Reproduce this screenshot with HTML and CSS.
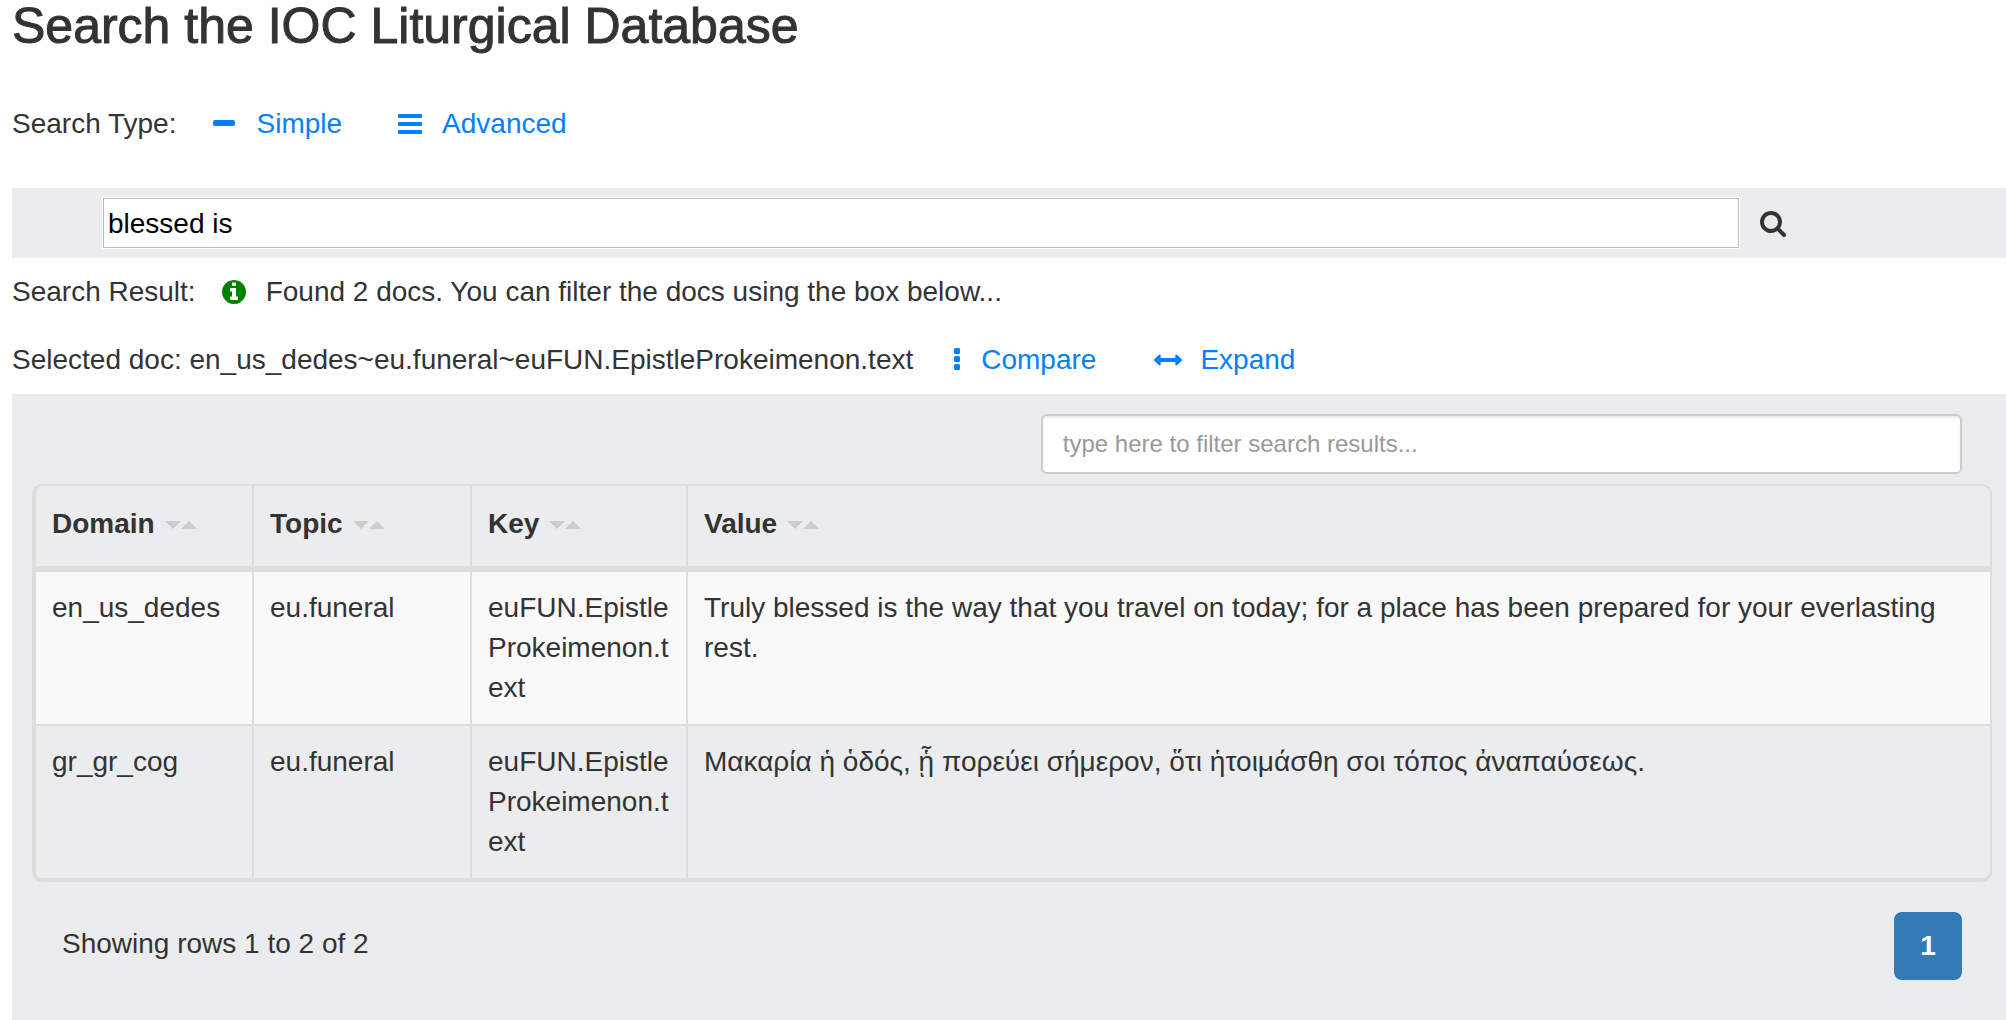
FILE: index.html
```html
<!DOCTYPE html>
<html lang="en">
<head>
<meta charset="utf-8">
<title>Search the IOC Liturgical Database</title>
<link rel="stylesheet" href="styles.css">
</head>
<body>
<main class="page">
  <h1 class="title">Search the IOC Liturgical Database</h1>

  <div class="row row-type">
    <span class="label">Search Type:</span>
    <a class="action" href="#simple">
      <svg class="icon" viewBox="0 0 28 28" aria-hidden="true"><rect x="3" y="10" width="22" height="6" rx="2"/></svg>
      Simple</a>
    <a class="action" href="#advanced">
      <svg class="icon" viewBox="0 0 28 28" aria-hidden="true"><rect x="2" y="4" width="24" height="4" rx="1"/><rect x="2" y="12" width="24" height="4" rx="1"/><rect x="2" y="20" width="24" height="4" rx="1"/></svg>
      Advanced</a>
  </div>

  <form class="search">
    <input class="search-input" type="text" value="blessed is" aria-label="Search text">
    <button class="search-button" type="button" aria-label="Search">
      <svg class="icon" viewBox="0 0 1792 1792" aria-hidden="true"><path d="M1216 832q0-185-131.500-316.500t-316.500-131.500-316.500 131.500-131.500 316.500 131.500 316.500 316.500 131.500 316.500-131.500 131.500-316.500zm512 832q0 52-38 90t-90 38q-54 0-90-38l-343-342q-179 124-399 124-143 0-273.500-55.500t-225-150-150-225-55.500-273.500 55.500-273.500 150-225 225-150 273.500-55.500 273.500 55.500 225 150 150 225 55.500 273.500q0 220-124 399l343 343q37 37 37 90z"/></svg>
    </button>
  </form>

  <div class="row row-result">
    <span class="label">Search Result:</span>
    <span class="found">
      <svg class="icon icon-info" viewBox="0 0 1792 1792" aria-hidden="true"><path d="M1152 1376v-160q0-14-9-23t-23-9h-96v-512q0-14-9-23t-23-9h-320q-14 0-23 9t-9 23v160q0 14 9 23t23 9h96v320h-96q-14 0-23 9t-9 23v160q0 14 9 23t23 9h448q14 0 23-9t9-23zm-128-896v-160q0-14-9-23t-23-9h-192q-14 0-23 9t-9 23v160q0 14 9 23t23 9h192q14 0 23-9t9-23zm640 416q0 209-103 385.500t-279.500 279.500-385.500 103-385.500-103-279.500-279.500-103-385.500 103-385.500 279.500-279.500 385.500-103 385.500 103 279.500 279.500 103 385.500z"/></svg>
      Found 2 docs. You can filter the docs using the box below...</span>
  </div>

  <div class="row row-selected">
    <span class="label">Selected doc: en_us_dedes~eu.funeral~euFUN.EpistleProkeimenon.text</span>
    <a class="action" href="#compare">
      <svg class="icon icon-narrow" viewBox="0 0 12 28" aria-hidden="true"><rect x="3" y="2" width="6" height="6" rx="1.500"/><rect x="3" y="10" width="6" height="6" rx="1.500"/><rect x="3" y="18" width="6" height="6" rx="1.500"/></svg>
      Compare</a>
    <a class="action" href="#expand">
      <svg class="icon" viewBox="0 0 28 28" aria-hidden="true"><path d="M0.300 13.300L5 8.800q1.500-1 1.700 .8V12h14.600V9.600q.2-1.800 1.700-.8l4.700 4.500q.6.700 0 1.400L23 19.200q-1.500 1-1.700-.8V16H6.700v2.400q-.2 1.800-1.700.8L.3 14.700q-.6-.7 0-1.400z"/></svg>
      Expand</a>
  </div>

  <section class="results">
    <input class="filter" type="text" placeholder="type here to filter search results..." aria-label="Filter search results">
    <table class="table">
      <colgroup><col class="col-domain"><col class="col-topic"><col class="col-key"><col></colgroup>
      <thead>
        <tr>
          <th scope="col">Domain<svg class="sort" viewBox="0 0 32 8" aria-hidden="true"><path d="M0 0h16l-8 8zM16 8l8-8 8 8z"/></svg></th>
          <th scope="col">Topic<svg class="sort" viewBox="0 0 32 8" aria-hidden="true"><path d="M0 0h16l-8 8zM16 8l8-8 8 8z"/></svg></th>
          <th scope="col">Key<svg class="sort" viewBox="0 0 32 8" aria-hidden="true"><path d="M0 0h16l-8 8zM16 8l8-8 8 8z"/></svg></th>
          <th scope="col">Value<svg class="sort" viewBox="0 0 32 8" aria-hidden="true"><path d="M0 0h16l-8 8zM16 8l8-8 8 8z"/></svg></th>
        </tr>
      </thead>
      <tbody>
        <tr>
          <td>en_us_dedes</td>
          <td>eu.funeral</td>
          <td>euFUN.EpistleProkeimenon.text</td>
          <td>Truly blessed is the way that you travel on today; for a place has been prepared for your everlasting rest.</td>
        </tr>
        <tr>
          <td>gr_gr_cog</td>
          <td>eu.funeral</td>
          <td>euFUN.EpistleProkeimenon.text</td>
          <td lang="el">Μακαρία ἡ ὁδός, ᾗ πορεύει σήμερον, ὅτι ἡτοιμάσθη σοι τόπος ἀναπαύσεως.</td>
        </tr>
      </tbody>
    </table>
    <footer class="footer">
      <span class="summary">Showing rows 1 to 2 of 2</span>
      <button class="page-button" type="button">1</button>
    </footer>
  </section>
</main>
</body>
</html>
```

FILE: styles.css
```css
* {
  box-sizing: border-box;
}

body {
  margin: 0;
  background: #fff;
  color: #333;
  font-family: "Liberation Sans", Arial, sans-serif;
  font-size: 28px;
  line-height: 40px;
}

.page {
  display: flex;
  flex-direction: column;
  min-height: 100vh;
  padding-left: 12px;
}

.title {
  margin: 0 0 52px;
  font-size: 50px;
  font-weight: 400;
  line-height: 52px;
  -webkit-text-stroke: 1px #333;
}

.row {
  display: flex;
  white-space: nowrap;
}

.row-type {
  gap: 54px;
  margin-bottom: 44px;
}

.row-result {
  gap: 24px;
  margin: 14px 0 28px;
}

.row-selected {
  gap: 58px;
  margin-bottom: 14px;
}

.row-type .label,
.row-selected .label {
  margin-right: -20px;
}

.action,
.found {
  display: flex;
  align-items: center;
  gap: 18px;
}

.action {
  color: #007fff;
  text-decoration: none;
}

.icon {
  display: block;
  flex: none;
  width: 28px;
  height: 28px;
  fill: currentColor;
}

.icon-narrow {
  width: 12px;
}

.icon-info {
  color: #008000;
}

.search {
  display: flex;
  align-items: center;
  gap: 19px;
  height: 70px;
  padding: 0 219px 0 90px;
  background: #ebecee;
}

.search-input {
  flex: 1;
  min-width: 0;
  height: 52px;
  padding: 2px 5px 0;
  border: 1px solid #fff;
  outline: 1px solid #bbb;
  outline-offset: -2px;
  background: #fff;
  color: #000;
  font: inherit;
}

.search-button {
  padding: 0;
  border: 0;
  background: none;
  color: #333;
}

.results {
  display: flex;
  flex: 1;
  flex-direction: column;
  padding: 20px 14px 36px 20px;
  background: #ebecee;
}

.filter {
  align-self: flex-end;
  width: 47%;
  height: 60px;
  margin: 0 30px 10px 0;
  padding: 0 20px;
  border: 2px solid #ccc;
  border-radius: 6px;
  background: #fff;
  box-shadow: inset 0 2px 2px rgba(0, 0, 0, 0.075);
  color: #555;
  font: inherit;
  font-size: 24px;
}

.filter::placeholder {
  color: #999;
}

.table {
  width: 100%;
  border: 2px solid #ddd;
  border-width: 2px 2px 4px 4px;
  border-radius: 10px;
  border-collapse: separate;
  border-spacing: 0;
  table-layout: fixed;
}

.col-domain,
.col-topic {
  width: 218px;
}

.col-key {
  width: 216px;
}

.table th,
.table td {
  padding: 16px;
  border-right: 2px solid #ddd;
  text-align: left;
  vertical-align: top;
  overflow-wrap: anywhere;
}

.table th {
  padding: 18px 16px 22px;
  border-bottom: 6px solid #ddd;
}

.table th:last-child,
.table td:last-child {
  border-right: 0;
}

.table tbody tr:first-child td {
  border-bottom: 2px solid #ddd;
  background: #f9f9f9;
}

.sort {
  width: 32px;
  height: 8px;
  margin-left: 10px;
  vertical-align: 4px;
  fill: #ccc;
}

.footer {
  display: flex;
  align-items: flex-start;
  justify-content: space-between;
  padding: 30px 30px 0;
}

.summary {
  padding-top: 12px;
}

.page-button {
  width: 68px;
  height: 68px;
  padding: 0;
  border: 0;
  border-radius: 8px;
  background: #337ab7;
  color: #fff;
  font: inherit;
  font-weight: 700;
}
```
